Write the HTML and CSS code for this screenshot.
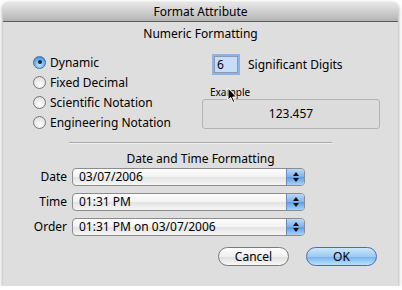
FILE: index.html
```html
<!DOCTYPE html>
<html lang="en">
<head>
    <meta charset="UTF-8">
    <title>Format Attribute</title>
    <link rel="stylesheet" href="styles.css">
</head>
<body>
    <div class="window">
        <div class="titlebar">Format Attribute</div>
        <div class="content">
            <div class="section-title">Numeric Formatting</div>
            <div class="numeric">
                <div class="radios">
                    <label class="radio"><span class="dot checked"></span>Dynamic</label>
                    <label class="radio"><span class="dot"></span>Fixed Decimal</label>
                    <label class="radio"><span class="dot"></span>Scientific Notation</label>
                    <label class="radio"><span class="dot"></span>Engineering Notation</label>
                </div>
                <div class="digits-col">
                    <div class="digits">
                        <span class="digit-field">6</span>
                        <span>Significant Digits</span>
                    </div>
                    <div class="example-label">Example</div>
                    <div class="example-box">123.457</div>
                </div>
            </div>

            <div class="separator"></div>

            <div class="section-title dt">Date and Time Formatting</div>
            <div class="rows">
                <div class="row">
                    <span class="row-label">Date</span>
                    <div class="popup"><span>03/07/2006</span><span class="stepper"></span></div>
                </div>
                <div class="row">
                    <span class="row-label">Time</span>
                    <div class="popup"><span>01:31 PM</span><span class="stepper"></span></div>
                </div>
                <div class="row">
                    <span class="row-label">Order</span>
                    <div class="popup"><span>01:31 PM on 03/07/2006</span><span class="stepper"></span></div>
                </div>
            </div>

            <div class="buttons">
                <button class="btn">Cancel</button>
                <button class="btn default">OK</button>
            </div>
        </div>
        <!-- mouse cursor over the Example label -->
        <svg class="cursor" width="11" height="17" viewBox="0 0 11 17">
            <path d="M1 1 L1 13 L3.8 10.5 L6 15.5 L7.8 14.7 L5.7 10 L9.5 10 Z" fill="#000" stroke="#fff" stroke-width="1"/>
        </svg>
    </div>
</body>
</html>
```

FILE: styles.css
```css
body {
    margin: 0;
    background: #fff;
    font-family: "Noto Sans", "DejaVu Sans", sans-serif;
    font-size: 12px;
    color: #000;
}
.window {
    position: relative;
    margin: 3px 0 0 3px;
    width: 395px;
    height: 283px;
    background: #dedede;
    border-radius: 5px 5px 0 0;
    box-shadow: 0 1px 4px rgba(0, 0, 0, 0.45);
    overflow: hidden;
}
.titlebar {
    height: 18px;
    line-height: 18px;
    text-align: center;
    background: linear-gradient(#e6e6e6, #b4b4b4);
    border-bottom: 1px solid #5a5a5a;
}
.content {
    padding: 4px 0 0 0;
}
.section-title {
    text-align: center;
    height: 16px;
    line-height: 16px;
}
.numeric {
    display: flex;
    margin-top: 10px;
}
.radios {
    width: 199px;
    padding-left: 30px;
    box-sizing: border-box;
}
.radio {
    display: flex;
    align-items: center;
    height: 20px;
    gap: 4px;
}
.dot {
    width: 13px;
    height: 13px;
    border-radius: 50%;
    border: 1px solid #777;
    background: radial-gradient(circle at 50% 70%, #fff, #e4e4e4 70%, #c8c8c8);
    box-sizing: border-box;
    position: relative;
}
.dot.checked {
    border-color: #3a6ea8;
    background: radial-gradient(circle at 50% 70%, #c5e3fb, #6aa9e4 60%, #2f71c0);
}
.dot.checked::after {
    content: "";
    position: absolute;
    left: 3.5px;
    top: 3.5px;
    width: 4px;
    height: 4px;
    border-radius: 50%;
    background: #102a4a;
}
.digits-col {
    width: 178px;
}
.digits {
    display: flex;
    align-items: center;
    gap: 10px;
    padding-left: 12px;
    margin-top: 4px;
}
.digit-field {
    width: 20px;
    height: 15px;
    line-height: 15px;
    padding-left: 2px;
    background: #c8dcf8;
    border: 1px solid #8a9ab0;
    box-shadow: 0 0 0 2px #8cb4e8;
}
.example-label {
    font-size: 10px;
    margin: 12px 0 0 8px;
}
.example-box {
    height: 28px;
    line-height: 28px;
    text-align: center;
    margin-top: 0;
    border: 1px solid #b4b4b4;
    border-radius: 3px;
    background: #dcdcdc;
}
.separator {
    margin: 10px 0 0 66px;
    width: 263px;
    border-top: 1px solid #a8a8a8;
    border-bottom: 1px solid #f0f0f0;
}
.section-title.dt {
    margin-top: 7px;
}
.rows {
    margin-top: -3px;
}
.row {
    display: flex;
    align-items: center;
    height: 25px;
}
.row-label {
    width: 64px;
    text-align: right;
    padding-right: 5px;
}
.popup {
    width: 233px;
    height: 18px;
    display: flex;
    align-items: center;
    justify-content: space-between;
    box-sizing: border-box;
    border: 1px solid #8c8c8c;
    border-radius: 4px;
    background: linear-gradient(#fdfdfd, #f2f2f2 50%, #e2e2e2 51%, #f6f6f6);
    padding-left: 6px;
    overflow: hidden;
}
.stepper {
    width: 17px;
    height: 16px;
    border-left: 1px solid #6a8cc0;
    background: linear-gradient(#b9d8f6, #7fb2e8 50%, #5c9de2 51%, #a7d2fb);
    position: relative;
}
.stepper::before, .stepper::after {
    content: "";
    position: absolute;
    left: 6px;
    border-left: 3px solid transparent;
    border-right: 3px solid transparent;
}
.stepper::before {
    top: 3px;
    border-bottom: 4px solid #111;
}
.stepper::after {
    top: 9px;
    border-top: 4px solid #111;
}
.buttons {
    display: flex;
    justify-content: flex-end;
    gap: 17px;
    padding-right: 21px;
    margin-top: 8px;
}
.btn {
    width: 71px;
    height: 19px;
    border-radius: 10px;
    border: 1px solid #7a7a7a;
    font-family: inherit;
    font-size: 12px;
    padding: 0;
    background: linear-gradient(#fefefe, #f0f0f0 50%, #dedede 51%, #f8f8f8);
}
.btn.default {
    border-color: #4a6fa8;
    background: linear-gradient(#cfe6fb, #9ccaf3 50%, #74b2ec 51%, #bde0fb);
}
.cursor {
    position: absolute;
    left: 224px;
    top: 84px;
}
```
